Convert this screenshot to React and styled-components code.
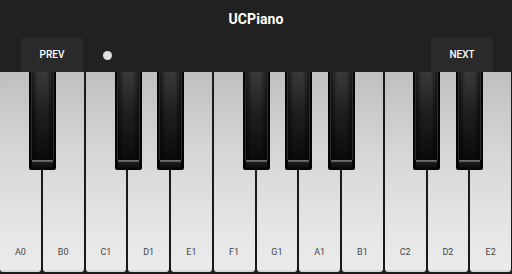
import React from "react";
import styled, { createGlobalStyle } from "styled-components";

const Global = createGlobalStyle`
  html, body { margin: 0; padding: 0; background: #212121; }
  body { width: 512px; height: 274px; overflow: hidden; font-family: Roboto, "Liberation Sans", Arial, sans-serif; }
`;

const Page = styled.div`
  width: 512px;
  height: 274px;
  display: flex;
  flex-direction: column;
  background: #212121;
`;

const Header = styled.header`
  height: 72px;
  display: flex;
  flex-direction: column;
  background: #212121;
`;

const TitleRow = styled.div`
  height: 38px;
  display: flex;
  align-items: center;
  justify-content: center;
`;

const Title = styled.h1`
  margin: 0;
  font-size: 14px;
  font-weight: 700;
  color: #ffffff;
  letter-spacing: 0.1px;
`;

const Controls = styled.div`
  height: 34px;
  display: flex;
  align-items: stretch;
  padding: 0 19px 0 21px;
`;

const NavButton = styled.button`
  width: 62px;
  border: none;
  background: #2a2a2a;
  color: #ffffff;
  font-family: inherit;
  font-size: 10px;
  font-weight: 500;
  padding: 0 0 1px;
  border-radius: 2px 2px 0 0;
`;

const Dot = styled.span`
  width: 9px;
  height: 9px;
  border-radius: 50%;
  background: #e0e0e0;
  align-self: center;
  margin-left: 20px;
`;

const Spacer = styled.div`
  flex: 1;
`;

const Keyboard = styled.div`
  position: relative;
  flex: 1;
  display: flex;
  background: #1a1a1a;
`;

const WhiteKey = styled.div`
  flex: 1;
  margin: 0 1px 2px;
  border-radius: 0 0 3px 3px;
  background: linear-gradient(to bottom, #bfbfbf 0%, #d6d6d6 40%, #e6e6e6 80%, #ebebeb 100%);
  box-shadow: inset 0 -2px 1px rgba(0,0,0,0.08);
  display: flex;
  align-items: flex-end;
  justify-content: center;
  &:first-child { margin-left: 0; }
  &:last-child { margin-right: 0; }
`;

const Label = styled.span`
  font-size: 9px;
  font-weight: 400;
  color: #454545;
  margin-bottom: 15px;
`;

const BlackKey = styled.div`
  position: absolute;
  top: 0;
  width: 27px;
  height: 98px;
  box-sizing: border-box;
  background: #050505;
  border-radius: 0 0 2px 2px;
  padding: 0 2px 2px;
  display: flex;
  flex-direction: column;
`;

const BlackBody = styled.div`
  flex: 1;
  box-sizing: border-box;
  border: 1px solid #2c2c2c;
  border-top: none;
  border-bottom: 1px solid #707070;
  border-radius: 0 0 2px 2px;
  background:
    linear-gradient(to right, rgba(0,0,0,0.55) 0%, rgba(0,0,0,0) 30%, rgba(0,0,0,0) 70%, rgba(0,0,0,0.55) 100%),
    linear-gradient(to bottom, #3a3a3a 0%, #202020 45%, #0a0a0a 100%);
`;

const BlackLip = styled.div`
  height: 7px;
  box-sizing: border-box;
  margin: 0 1px;
  border-top: 1px solid #5a5a5a;
  background: linear-gradient(to bottom, #1e1e1e, #0a0a0a);
`;

const whites = ["A0", "B0", "C1", "D1", "E1", "F1", "G1", "A1", "B1", "C2", "D2", "E2"];
const blackAfter = [0, 2, 3, 5, 6, 7, 9, 10];

export default function App() {
  const w = 512 / 12;
  return (
    <>
      <Global />
      <Page>
        <Header>
          <TitleRow>
            <Title>UCPiano</Title>
          </TitleRow>
          <Controls>
            <NavButton>PREV</NavButton>
            <Dot />
            <Spacer />
            <NavButton>NEXT</NavButton>
          </Controls>
        </Header>
        <Keyboard>
          {whites.map((n) => (
            <WhiteKey key={n}>
              <Label>{n}</Label>
            </WhiteKey>
          ))}
          {blackAfter.map((i) => (
            <BlackKey key={i} style={{ left: `${(i + 1) * w - 13.5}px` }}>
              <BlackBody />
              <BlackLip />
            </BlackKey>
          ))}
        </Keyboard>
      </Page>
    </>
  );
}
